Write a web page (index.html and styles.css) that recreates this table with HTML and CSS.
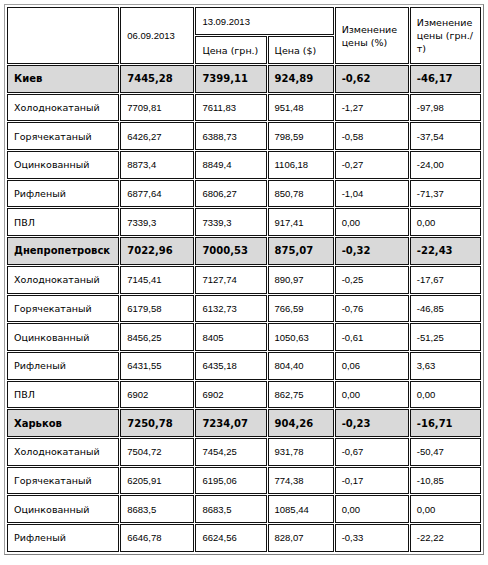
FILE: index.html
```html
<!DOCTYPE html>
<html lang="ru">
<head>
<meta charset="utf-8">
<link rel="stylesheet" href="styles.css">
</head>
<body>
<div class="wrap">
<table class="prices">
  <colgroup>
    <col class="c1"><col class="c2"><col class="c3"><col class="c4"><col class="c5"><col class="c6">
  </colgroup>
  <thead>
    <tr class="h">
      <td rowspan="2"></td>
      <td rowspan="2" class="num">06.09.2013</td>
      <td colspan="2" class="num">13.09.2013</td>
      <td rowspan="2">Изменение<br>цены (%)</td>
      <td rowspan="2">Изменение<br>цены (грн./<br>т)</td>
    </tr>
    <tr class="h">
      <td>Цена (грн.)</td>
      <td>Цена ($)</td>
    </tr>
  </thead>
  <tbody>
    <tr class="city"><td>Киев</td><td>7445,28</td><td>7399,11</td><td>924,89</td><td>-0,62</td><td>-46,17</td></tr>
    <tr><td>Холоднокатаный</td><td class="num">7709,81</td><td class="num">7611,83</td><td class="num">951,48</td><td class="num">-1,27</td><td class="num">-97,98</td></tr>
    <tr><td>Горячекатаный</td><td class="num">6426,27</td><td class="num">6388,73</td><td class="num">798,59</td><td class="num">-0,58</td><td class="num">-37,54</td></tr>
    <tr><td>Оцинкованный</td><td class="num">8873,4</td><td class="num">8849,4</td><td class="num">1106,18</td><td class="num">-0,27</td><td class="num">-24,00</td></tr>
    <tr><td>Рифленый</td><td class="num">6877,64</td><td class="num">6806,27</td><td class="num">850,78</td><td class="num">-1,04</td><td class="num">-71,37</td></tr>
    <tr><td>ПВЛ</td><td class="num">7339,3</td><td class="num">7339,3</td><td class="num">917,41</td><td class="num">0,00</td><td class="num">0,00</td></tr>
    <tr class="city"><td>Днепропетровск</td><td>7022,96</td><td>7000,53</td><td>875,07</td><td>-0,32</td><td>-22,43</td></tr>
    <tr><td>Холоднокатаный</td><td class="num">7145,41</td><td class="num">7127,74</td><td class="num">890,97</td><td class="num">-0,25</td><td class="num">-17,67</td></tr>
    <tr><td>Горячекатаный</td><td class="num">6179,58</td><td class="num">6132,73</td><td class="num">766,59</td><td class="num">-0,76</td><td class="num">-46,85</td></tr>
    <tr><td>Оцинкованный</td><td class="num">8456,25</td><td class="num">8405</td><td class="num">1050,63</td><td class="num">-0,61</td><td class="num">-51,25</td></tr>
    <tr><td>Рифленый</td><td class="num">6431,55</td><td class="num">6435,18</td><td class="num">804,40</td><td class="num">0,06</td><td class="num">3,63</td></tr>
    <tr><td>ПВЛ</td><td class="num">6902</td><td class="num">6902</td><td class="num">862,75</td><td class="num">0,00</td><td class="num">0,00</td></tr>
    <tr class="city"><td>Харьков</td><td>7250,78</td><td>7234,07</td><td>904,26</td><td>-0,23</td><td>-16,71</td></tr>
    <tr><td>Холоднокатаный</td><td class="num">7504,72</td><td class="num">7454,25</td><td class="num">931,78</td><td class="num">-0,67</td><td class="num">-50,47</td></tr>
    <tr><td>Горячекатаный</td><td class="num">6205,91</td><td class="num">6195,06</td><td class="num">774,38</td><td class="num">-0,17</td><td class="num">-10,85</td></tr>
    <tr><td>Оцинкованный</td><td class="num">8683,5</td><td class="num">8683,5</td><td class="num">1085,44</td><td class="num">0,00</td><td class="num">0,00</td></tr>
    <tr><td>Рифленый</td><td class="num">6646,78</td><td class="num">6624,56</td><td class="num">828,07</td><td class="num">-0,33</td><td class="num">-22,22</td></tr>
  </tbody>
</table>
</div>
</body>
</html>
```
FILE: styles.css
```css
html, body {
  margin: 0;
  padding: 0;
  background: #fff;
}
.wrap {
  padding: 4px 0 0 4px;
}
.prices {
  table-layout: fixed;
  width: 480px;
  border-collapse: separate;
  border-spacing: 1px;
  padding: 1px;
  border: 1px solid #a0a0a0;
  border-right-color: #808080;
  border-bottom-color: #808080;
  font-family: "DejaVu Sans", Verdana, sans-serif;
  font-size: 9.5px;
  color: #000;
}
.c1 { width: 112px; }
.c2 { width: 74px; }
.c3 { width: 71px; }
.c4 { width: 66px; }
.c5 { width: 74px; }
.c6 { width: 71px; }
.prices td {
  box-sizing: border-box;
  height: 27.7px;
  padding: 0 6px;
  border: 1px solid #111;
  vertical-align: middle;
  text-align: left;
  line-height: 13px;
  white-space: nowrap;
}
.prices td.num {
  font-family: "Liberation Sans", Arial, sans-serif;
  font-size: 9.5px;
}
.prices tr.h td {
  height: 28px;
}
.prices tr.city td {
  background: #d9d9d9;
  font-weight: bold;
  font-size: 10px;
}
```
